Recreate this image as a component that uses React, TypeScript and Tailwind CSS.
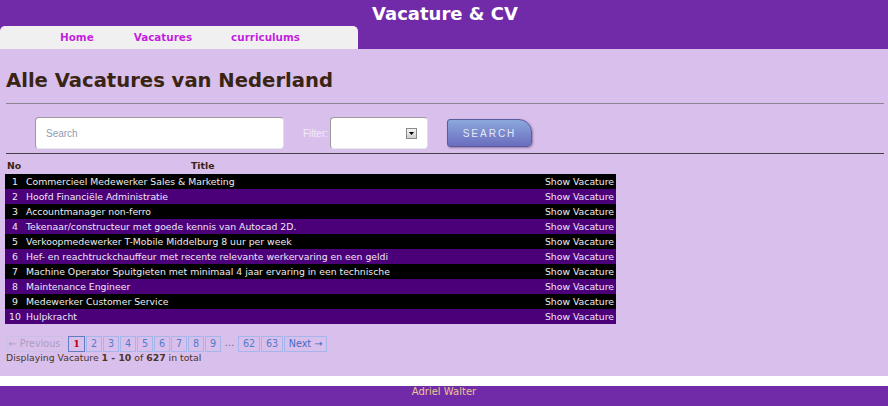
import React from "react";

const verdana = { fontFamily: '"DejaVu Sans", Verdana, sans-serif' };
const arial = { fontFamily: '"Liberation Sans", Arial, sans-serif' };

const vacatures = [
  "Commercieel Medewerker Sales & Marketing",
  "Hoofd Financiële Administratie",
  "Accountmanager non-ferro",
  "Tekenaar/constructeur met goede kennis van Autocad 2D.",
  "Verkoopmedewerker T-Mobile Middelburg 8 uur per week",
  "Hef- en reachtruckchauffeur met recente relevante werkervaring en een geldi",
  "Machine Operator Spuitgieten met minimaal 4 jaar ervaring in een technische",
  "Maintenance Engineer",
  "Medewerker Customer Service",
  "Hulpkracht",
];

const pages = ["2", "3", "4", "5", "6", "7", "8", "9"];

const App = () => {
  return (
    <div className="flex w-[888px] flex-col bg-white" style={verdana}>
      <header className="flex h-[49px] flex-col bg-[#722ba8]">
        <div className="flex h-[26px] items-start justify-center pl-[2px] pt-[3px]">
          <h2 className="text-[18px] font-bold leading-[22px] text-white">
            Vacature &amp; CV
          </h2>
        </div>
        <nav className="flex h-[23px] w-[358px] items-center rounded-t-[5px] bg-[#f0f0f0] pl-[60px] text-[10.4px] font-bold text-[#c31ee0] [text-shadow:0_0_2px_#ffffff]">
          <a className="mr-[40px]">Home</a>
          <a className="mr-[39px]">Vacatures</a>
          <a>curriculums</a>
        </nav>
      </header>

      <main className="flex h-[327px] flex-col bg-[#d9bfeb] pl-[6px] pr-[4px]">
        <h1 className="mt-[20px] text-[19.6px] font-bold leading-[24px] text-[#3a2414]">
          Alle Vacatures van Nederland
        </h1>
        <hr className="mt-[10px] border-t border-[#8c8490]" />

        <div className="mt-[13px] flex h-[32px] items-center pl-[29px]" style={arial}>
          <div className="flex h-[32px] w-[249px] items-center rounded-[4px] border border-t-[#9a9a9a] border-l-[#9a9a9a] border-r-[#e0e0e0] border-b-[#e8e8e8] bg-white pl-[10px] text-[10px] text-[#8d9cb4]">
            Search
          </div>
          <span className="ml-[19px] mr-[2px] text-[10px] text-[#f4ecfa]">Filter:</span>
          <div className="flex h-[32px] w-[98px] items-center justify-end rounded-[4px] border border-t-[#9a9a9a] border-l-[#9a9a9a] border-r-[#e0e0e0] border-b-[#e8e8e8] bg-white pr-[10px]">
            <div className="flex h-[11px] w-[11px] items-center justify-center border border-[#8a8a8a] bg-gradient-to-b from-[#f4f4f4] to-[#cfcfcf]">
              <svg width="5" height="3" viewBox="0 0 5 3">
                <path d="M0 0h5L2.5 3z" fill="#000" />
              </svg>
            </div>
          </div>
          <button className="ml-[19px] flex h-[28px] w-[85px] items-center justify-center rounded-l-[3px] rounded-tr-[13px] rounded-br-[5px] border border-[#5a5c9c] bg-gradient-to-b from-[#8ba8dc] to-[#6b6dbe] text-[10px] tracking-[2px] text-[#e6e8f8] shadow-[1px_1px_2px_rgba(60,40,90,0.45)]">
            SEARCH
          </button>
        </div>

        <hr className="mt-[4px] border-t border-[#454045]" />

        <table className="-ml-px mt-[6px] w-[611px] border-collapse text-[9.3px] leading-[15px]">
          <thead>
            <tr className="h-[14px] text-left font-bold text-[#3a2414]">
              <th className="w-[20px] pl-[2px] align-top leading-[12px]">No</th>
              <th className="pl-[166px] align-top leading-[12px]">Title</th>
              <th />
            </tr>
          </thead>
          <tbody>
            {vacatures.map((title, i) => (
              <tr
                key={title}
                className={
                  i % 2 === 0
                    ? "h-[15px] bg-black text-[#ececec]"
                    : "h-[15px] bg-[#4b0079] text-[#efe6fa]"
                }
              >
                <td className="w-[20px] p-0 text-center">{i + 1}</td>
                <td className="whitespace-nowrap p-0 pl-px">{title}</td>
                <td className="whitespace-nowrap p-0 pr-[2px] text-right">Show Vacature</td>
              </tr>
            ))}
          </tbody>
        </table>

        <div className="mt-[12px] flex h-[16px] items-stretch text-[9.6px] leading-[14px]">
          <span className="flex w-[57px] items-center justify-center border border-[#cbc0e4] text-[#a99fc0]">
            ← Previous
          </span>
          <span className="ml-[5px] flex w-[17px] items-center justify-center border border-[#5f7cc4] font-bold text-[#c00018]" style={{ fontFamily: '"DejaVu Serif", serif' }}>
            1
          </span>
          {pages.map((p) => (
            <span
              key={p}
              className="ml-px flex w-[16px] items-center justify-center border border-[#a4b6ea] text-[#4f7ccc]"
            >
              {p}
            </span>
          ))}
          <span className="flex w-[17px] items-start justify-center text-[#6d6880]">…</span>
          <span className="flex w-[22px] items-center justify-center border border-[#a4b6ea] text-[#4f7ccc]">
            62
          </span>
          <span className="ml-px flex w-[22px] items-center justify-center border border-[#a4b6ea] text-[#4f7ccc]">
            63
          </span>
          <span className="ml-px flex w-[43px] items-center justify-center border border-[#a4b6ea] text-[#3f6cc4]">
            Next →
          </span>
        </div>
        <p className="text-[9.3px] leading-[11px] text-[#4a3428]">
          Displaying Vacature <b>1 - 10</b> of <b>627</b> in total
        </p>
      </main>

      <div className="h-[10px] bg-white" />
      <footer className="flex h-[20px] justify-center bg-[#722ba8] pt-0 text-[10px] leading-[12px] text-[#e6c88e]">
        Adriel Walter
      </footer>
    </div>
  );
};

export default App;
